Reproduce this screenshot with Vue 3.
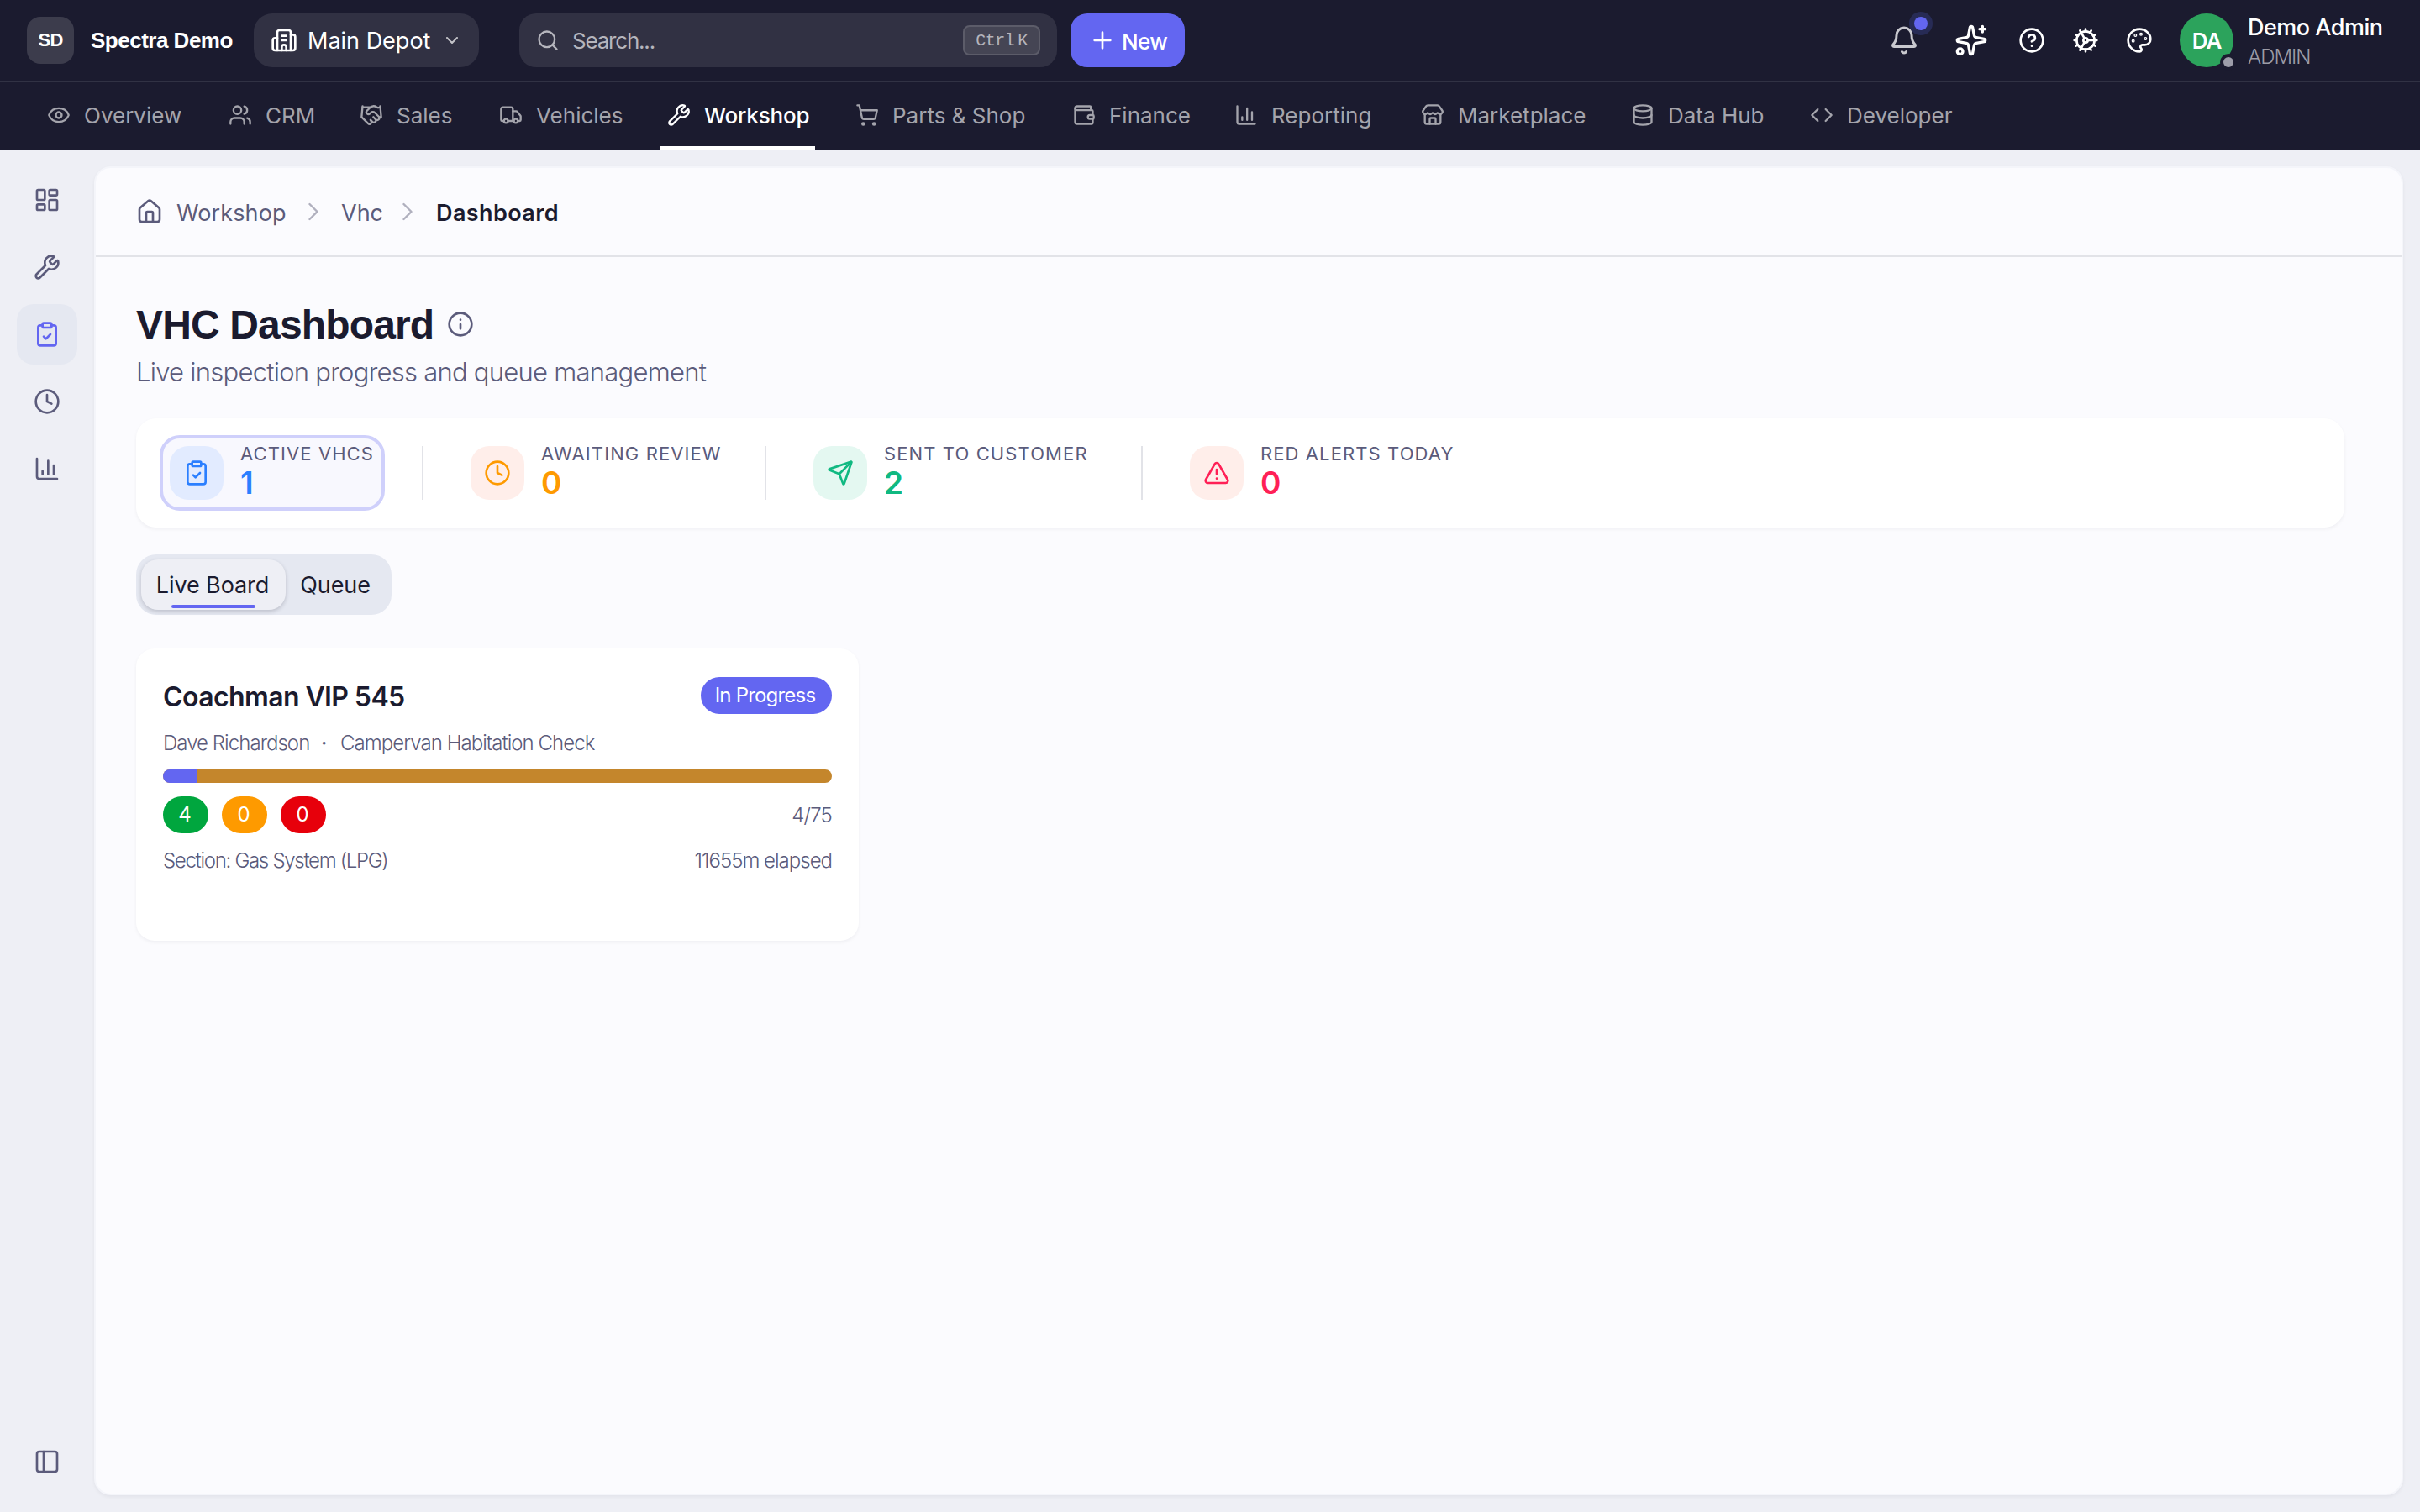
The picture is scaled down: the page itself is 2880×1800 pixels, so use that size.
<script setup>
    import { ref } from 'vue';

    const icons = {
        eye: '<path d="M2.062 12.348a1 1 0 0 1 0-.696 10.75 10.75 0 0 1 19.876 0 1 1 0 0 1 0 .696 10.75 10.75 0 0 1-19.876 0"/><circle cx="12" cy="12" r="3"/>',
        users: '<path d="M16 21v-2a4 4 0 0 0-4-4H6a4 4 0 0 0-4 4v2M16 3.128a4 4 0 0 1 0 7.744M22 21v-2a4 4 0 0 0-3-3.87"/><circle cx="9" cy="7" r="4"/>',
        handshake: '<path d="m11 17 2 2a1 1 0 1 0 3-3"/><path d="m14 14 2.5 2.5a1 1 0 1 0 3-3l-3.88-3.88a3 3 0 0 0-4.24 0l-.88.88a1 1 0 1 1-3-3l2.81-2.81a5.79 5.79 0 0 1 7.06-.87l.47.28a2 2 0 0 0 1.42.25L21 4"/><path d="m21 3 1 11h-2"/><path d="M3 3 2 14l6.5 6.5a1 1 0 1 0 3-3"/><path d="M3 4h8"/>',
        truck: '<path d="M14 18V6a2 2 0 0 0-2-2H4a2 2 0 0 0-2 2v11a1 1 0 0 0 1 1h2"/><path d="M15 18H9"/><path d="M19 18h2a1 1 0 0 0 1-1v-3.65a1 1 0 0 0-.22-.624l-3.48-4.35A1 1 0 0 0 17.52 8H14"/><circle cx="17" cy="18" r="2"/><circle cx="7" cy="18" r="2"/>',
        wrench: '<path d="M14.7 6.3a1 1 0 0 0 0 1.4l1.6 1.6a1 1 0 0 0 1.4 0l3.106-3.105c.32-.322.863-.22.983.218a6 6 0 0 1-8.259 7.057l-7.91 7.91a1 1 0 0 1-2.999-3l7.91-7.91a6 6 0 0 1 7.057-8.259c.438.12.54.662.219.984z"/>',
        cart: '<circle cx="8" cy="21" r="1"/><circle cx="19" cy="21" r="1"/><path d="M2.05 2.05h2l2.66 12.42a2 2 0 0 0 2 1.58h9.78a2 2 0 0 0 1.95-1.57l1.65-7.43H5.12"/>',
        wallet: '<path d="M19 7V4a1 1 0 0 0-1-1H5a2 2 0 0 0 0 4h15a1 1 0 0 1 1 1v4h-3a2 2 0 0 0 0 4h3a1 1 0 0 0 1-1v-2a1 1 0 0 0-1-1"/><path d="M3 5v14a2 2 0 0 0 2 2h15a1 1 0 0 0 1-1v-4"/>',
        chart: '<path d="M3 3v16a2 2 0 0 0 2 2h16M18 17V9M13 17V5M8 17v-3"/>',
        store: '<path d="M15 21v-5a1 1 0 0 0-1-1h-4a1 1 0 0 0-1 1v5"/><path d="M17.774 10.31a1.12 1.12 0 0 0-1.549 0 2.5 2.5 0 0 1-3.451 0 1.12 1.12 0 0 0-1.548 0 2.5 2.5 0 0 1-3.452 0 1.12 1.12 0 0 0-1.549 0 2.5 2.5 0 0 1-3.77-3.248l2.889-4.184A2 2 0 0 1 7 2h10a2 2 0 0 1 1.653.873l2.895 4.192a2.5 2.5 0 0 1-3.774 3.244"/><path d="M4 10.95V19a2 2 0 0 0 2 2h12a2 2 0 0 0 2-2v-8.05"/>',
        database: '<ellipse cx="12" cy="5" rx="9" ry="3"/><path d="M3 5V19A9 3 0 0 0 21 19V5"/><path d="M3 12A9 3 0 0 0 21 12"/>',
        code: '<path d="m16 18 6-6-6-6M8 6l-6 6 6 6"/>',
        building: '<path d="M10 12h4M10 8h4M14 21v-3a2 2 0 0 0-4 0v3"/><path d="M6 10H4a2 2 0 0 0-2 2v7a2 2 0 0 0 2 2h16a2 2 0 0 0 2-2V9a2 2 0 0 0-2-2h-2"/><path d="M6 21V5a2 2 0 0 1 2-2h8a2 2 0 0 1 2 2v16"/>',
        chevronDown: '<path d="m6 9 6 6 6-6"/>',
        chevronRight: '<path d="m9 18 6-6-6-6"/>',
        search: '<circle cx="11" cy="11" r="8"/><path d="m21 21-4.34-4.34"/>',
        plus: '<path d="M5 12h14M12 5v14"/>',
        bell: '<path d="M10.268 21a2 2 0 0 0 3.464 0"/><path d="M3.262 15.326A1 1 0 0 0 4 17h16a1 1 0 0 0 .74-1.673C19.41 13.956 18 12.499 18 8A6 6 0 0 0 6 8c0 4.499-1.411 5.956-2.738 7.326"/>',
        sparkles: '<path d="M11.017 2.814a1 1 0 0 1 1.966 0l1.051 5.558a2 2 0 0 0 1.594 1.594l5.558 1.051a1 1 0 0 1 0 1.966l-5.558 1.051a2 2 0 0 0-1.594 1.594l-1.051 5.558a1 1 0 0 1-1.966 0l-1.051-5.558a2 2 0 0 0-1.594-1.594l-5.558-1.051a1 1 0 0 1 0-1.966l5.558-1.051a2 2 0 0 0 1.594-1.594z"/><path d="M20 2v4M22 4h-4"/><circle cx="4" cy="20" r="2"/>',
        help: '<circle cx="12" cy="12" r="10"/><path d="M9.09 9a3 3 0 0 1 5.83 1c0 2-3 3-3 3M12 17h.01"/>',
        cog: '<path d="M11 10.27 7 3.34M11 13.73l-4 6.93M12 22v-2M12 2v2M14 12h8M17 20.66l-1-1.73M17 3.34l-1 1.73M2 12h2M20.66 17l-1.73-1M20.66 7l-1.73 1M3.34 17l1.73-1M3.34 7l1.73 1"/><circle cx="12" cy="12" r="2"/><circle cx="12" cy="12" r="8"/>',
        palette: '<path d="M12 22a1 1 0 0 1 0-20 10 9 0 0 1 10 9 5 5 0 0 1-5 5h-2.25a1.75 1.75 0 0 0-1.4 2.8l.3.4a1.75 1.75 0 0 1-1.4 2.8z"/><circle cx="13.5" cy="6.5" r=".5"/><circle cx="17.5" cy="10.5" r=".5"/><circle cx="6.5" cy="12.5" r=".5"/><circle cx="8.5" cy="7.5" r=".5"/>',
        dashboard: '<rect width="7" height="9" x="3" y="3" rx="1"/><rect width="7" height="5" x="14" y="3" rx="1"/><rect width="7" height="9" x="14" y="12" rx="1"/><rect width="7" height="5" x="3" y="16" rx="1"/>',
        clipboard: '<rect width="8" height="4" x="8" y="2" rx="1"/><path d="M16 4h2a2 2 0 0 1 2 2v14a2 2 0 0 1-2 2H6a2 2 0 0 1-2-2V6a2 2 0 0 1 2-2h2"/><path d="m9 14 2 2 4-4"/>',
        clock: '<circle cx="12" cy="12" r="10"/><path d="M12 6v6l4 2"/>',
        panel: '<rect width="18" height="18" x="3" y="3" rx="2"/><path d="M9 3v18"/>',
        home: '<path d="M15 21v-8a1 1 0 0 0-1-1h-4a1 1 0 0 0-1 1v8"/><path d="M3 10a2 2 0 0 1 .709-1.528l7-6a2 2 0 0 1 2.582 0l7 6A2 2 0 0 1 21 10v9a2 2 0 0 1-2 2H5a2 2 0 0 1-2-2z"/>',
        info: '<circle cx="12" cy="12" r="10"/><path d="M12 16v-4M12 8h.01"/>',
        send: '<path d="M14.536 21.686a.5.5 0 0 0 .937-.024l6.5-19a.496.496 0 0 0-.635-.635l-19 6.5a.5.5 0 0 0-.024.937l7.93 3.18a2 2 0 0 1 1.112 1.11z"/><path d="m21.854 2.147-10.94 10.939"/>',
        alert: '<path d="m21.73 18-8-14a2 2 0 0 0-3.48 0l-8 14A2 2 0 0 0 4 21h16a2 2 0 0 0 1.73-3"/><path d="M12 9v4M12 17h.01"/>'
    };

    // width is the full width of the tab, icon and padding included
    const nav = [
        { label: 'Overview', icon: 'eye', width: 176 },
        { label: 'CRM', icon: 'users', width: 116 },
        { label: 'Sales', icon: 'handshake', width: 126 },
        { label: 'Vehicles', icon: 'truck', width: 160 },
        { label: 'Workshop', icon: 'wrench', width: 184 },
        { label: 'Parts & Shop', icon: 'cart', width: 218 },
        { label: 'Finance', icon: 'wallet', width: 153 },
        { label: 'Reporting', icon: 'chart', width: 182 },
        { label: 'Marketplace', icon: 'store', width: 210 },
        { label: 'Data Hub', icon: 'database', width: 173 },
        { label: 'Developer', icon: 'code', width: 186 }
    ];
    const activeNav = ref('Workshop');

    const sideItems = ['dashboard', 'wrench', 'clipboard', 'clock', 'chart'];
    const activeSide = ref('clipboard');

    const stats = [
        { label: 'Active VHCs', value: 1, icon: 'clipboard', tone: 'blue', width: 268 },
        { label: 'Awaiting Review', value: 0, icon: 'clock', tone: 'orange', width: 318 },
        { label: 'Sent to Customer', value: 2, icon: 'send', tone: 'green', width: 358 },
        { label: 'Red Alerts Today', value: 0, icon: 'alert', tone: 'red', width: 340 }
    ];
    const activeStat = ref('Active VHCs');

    const tabs = ['Live Board', 'Queue'];
    const activeTab = ref('Live Board');

    const job = {
        vehicle: 'Coachman VIP 545',
        status: 'In Progress',
        technician: 'Dave Richardson',
        template: 'Campervan Habitation Check',
        green: 4,
        amber: 0,
        red: 0,
        done: 4,
        total: 75,
        percent: 5,
        section: 'Gas System (LPG)',
        elapsed: '11655m elapsed'
    };
</script>

<template>
    <div class="app">
        <header class="header">
            <div class="topbar">
                <div class="logo">SD</div>
                <div class="brand">Spectra Demo</div>
                <button type="button" class="depot">
                    <svg class="icon" viewBox="0 0 24 24" v-html="icons.building"></svg>
                    <span>Main Depot</span>
                    <svg class="icon chevron" viewBox="0 0 24 24" v-html="icons.chevronDown"></svg>
                </button>
                <div class="search">
                    <svg class="icon" viewBox="0 0 24 24" v-html="icons.search"></svg>
                    <span class="placeholder">Search...</span>
                    <kbd><span>Ctrl</span><span>K</span></kbd>
                </div>
                <button type="button" class="new">
                    <svg class="icon" viewBox="0 0 24 24" v-html="icons.plus"></svg>
                    <span>New</span>
                </button>
                <div class="actions">
                    <div class="bell">
                        <svg class="icon" viewBox="0 0 24 24" v-html="icons.bell"></svg>
                        <i class="dot"></i>
                    </div>
                    <svg class="icon sparkles" viewBox="0 0 24 24" v-html="icons.sparkles"></svg>
                    <svg class="icon" viewBox="0 0 24 24" v-html="icons.help"></svg>
                    <svg class="icon" viewBox="0 0 24 24" v-html="icons.cog"></svg>
                    <svg class="icon" viewBox="0 0 24 24" v-html="icons.palette"></svg>
                </div>
                <div class="avatar">DA<i class="presence"></i></div>
                <div class="user">
                    <div class="name">Demo Admin</div>
                    <div class="role">ADMIN</div>
                </div>
            </div>
            <nav class="nav">
                <a
                    v-for="item in nav"
                    :key="item.label"
                    :class="{active: item.label === activeNav}"
                    :style="{width: item.width + 'px'}"
                    @click="activeNav = item.label"
                >
                    <svg class="icon" viewBox="0 0 24 24" v-html="icons[item.icon]"></svg>
                    <span>{{ item.label }}</span>
                </a>
            </nav>
        </header>

        <div class="body">
            <aside class="sidebar">
                <button
                    v-for="name in sideItems"
                    :key="name"
                    type="button"
                    :class="{active: name === activeSide}"
                    @click="activeSide = name"
                >
                    <svg class="icon" viewBox="0 0 24 24" v-html="icons[name]"></svg>
                </button>
                <button type="button" class="toggle">
                    <svg class="icon" viewBox="0 0 24 24" v-html="icons.panel"></svg>
                </button>
            </aside>

            <main class="panel">
                <div class="breadcrumb">
                    <svg class="icon" viewBox="0 0 24 24" v-html="icons.home"></svg>
                    <span class="crumb first">Workshop</span>
                    <svg class="icon sep" viewBox="0 0 24 24" v-html="icons.chevronRight"></svg>
                    <span class="crumb second">Vhc</span>
                    <svg class="icon sep" viewBox="0 0 24 24" v-html="icons.chevronRight"></svg>
                    <span class="crumb current">Dashboard</span>
                </div>

                <div class="content">
                    <div class="title">
                        <h1>VHC Dashboard</h1>
                        <svg class="icon" viewBox="0 0 24 24" v-html="icons.info"></svg>
                    </div>
                    <p class="subtitle">Live inspection progress and queue management</p>

                    <div class="stats">
                        <template v-for="(stat, index) in stats" :key="stat.label">
                            <div v-if="index" class="divider"></div>
                            <div
                                class="stat"
                                :class="[stat.tone, {active: stat.label === activeStat}]"
                                :style="{width: stat.width + 'px'}"
                                @click="activeStat = stat.label"
                            >
                                <div class="tile">
                                    <svg class="icon" viewBox="0 0 24 24" v-html="icons[stat.icon]"></svg>
                                </div>
                                <div class="figures">
                                    <div class="label">{{ stat.label }}</div>
                                    <div class="value">{{ stat.value }}</div>
                                </div>
                            </div>
                        </template>
                    </div>

                    <div class="tabs">
                        <button
                            v-for="tab in tabs"
                            :key="tab"
                            type="button"
                            :class="{active: tab === activeTab}"
                            @click="activeTab = tab"
                        >{{ tab }}</button>
                    </div>

                    <div class="card">
                        <div class="row head">
                            <h2>{{ job.vehicle }}</h2>
                            <span class="status">{{ job.status }}</span>
                        </div>
                        <div class="meta">
                            <span class="tech">{{ job.technician }}</span>
                            <span class="mid">·</span>
                            <span class="tmpl">{{ job.template }}</span>
                        </div>
                        <div class="progress">
                            <div :style="{width: job.percent + '%'}"></div>
                        </div>
                        <div class="row counts">
                            <div class="pills">
                                <span class="pill green">{{ job.green }}</span>
                                <span class="pill amber">{{ job.amber }}</span>
                                <span class="pill red">{{ job.red }}</span>
                            </div>
                            <span class="total">{{ job.done }}/{{ job.total }}</span>
                        </div>
                        <div class="row foot">
                            <span class="section">Section: {{ job.section }}</span>
                            <span class="elapsed">{{ job.elapsed }}</span>
                        </div>
                    </div>
                </div>
            </main>
        </div>
    </div>
</template>

<style>
    body{
        background: #eeeff5;
    }
</style>

<style scoped>
    .app{
        width: 2880px;
        height: 1800px;
        overflow: hidden;
        display: flex;
        flex-direction: column;
        background: #eeeff5;
        color: #1b1b2f;
        font-family: Inter, "Liberation Sans", sans-serif;
        font-size: 26px;
    }
    .app *{
        box-sizing: border-box;
    }
    button{
        border: none;
        background: none;
        padding: 0;
        margin: 0;
        font: inherit;
        color: inherit;
    }
    span, a, h1, h2, .name, .role, .label, .brand{
        white-space: nowrap;
    }
    .icon{
        width: 32px;
        height: 32px;
        flex: none;
        display: block;
        fill: none;
        stroke: currentColor;
        stroke-width: 2;
        stroke-linecap: round;
        stroke-linejoin: round;
    }

    .header{
        height: 178px;
        background: #1b1b2f;
        color: #fff;
    }
    .topbar{
        height: 98px;
        padding: 0 45px 0 32px;
        border-bottom: 2px solid #313244;
        display: flex;
        align-items: center;
    }
    .logo{
        width: 56px;
        height: 56px;
        border-radius: 16px;
        background: #3c3c4c;
        display: flex;
        align-items: center;
        justify-content: center;
        font-family: "Liberation Sans", sans-serif;
        font-weight: 700;
        font-size: 22px;
        letter-spacing: -0.8px;
    }
    .brand{
        width: 214px;
        padding-left: 20px;
        font-family: "Liberation Sans", sans-serif;
        font-weight: 700;
        font-size: 26px;
        letter-spacing: -0.5px;
    }
    .depot{
        width: 268px;
        height: 64px;
        border-radius: 22px;
        background: #313143;
        display: flex;
        align-items: center;
        padding-left: 20px;
        font-size: 27px;
    }
    .depot span{
        width: 160px;
        margin-left: 12px;
        text-align: left;
    }
    .depot .chevron{
        width: 24px;
        height: 24px;
        opacity: 0.7;
    }
    .search{
        width: 640px;
        height: 64px;
        margin-left: 48px;
        padding: 0 20px;
        border-radius: 20px;
        background: #313143;
        color: #b5b5bd;
        display: flex;
        align-items: center;
    }
    .search .icon{
        width: 28px;
        height: 28px;
    }
    .placeholder{
        flex: 1;
        margin-left: 15px;
        font-size: 26px;
        letter-spacing: -1.2px;
    }
    kbd{
        width: 92px;
        height: 36px;
        border: 2px solid #5c5c69;
        border-radius: 8px;
        background: #454554;
        display: flex;
        align-items: center;
        justify-content: center;
        gap: 4px;
        font-family: "Liberation Mono", monospace;
        font-size: 20px;
        letter-spacing: -0.5px;
    }
    .new{
        width: 136px;
        height: 64px;
        margin-left: 16px;
        border-radius: 20px;
        background: #6366f1;
        display: flex;
        align-items: center;
        padding-left: 22px;
        gap: 7px;
        font-size: 26px;
        font-weight: 500;
        letter-spacing: -0.6px;
    }
    .new span{
        padding-top: 2px;
    }
    .actions{
        flex: 1;
        display: flex;
        align-items: center;
        justify-content: flex-end;
        gap: 32px;
    }
    .bell{
        position: relative;
        color: #c8c8ce;
        margin-right: 10px;
    }
    .bell .icon{
        width: 36px;
        height: 36px;
    }
    .dot{
        position: absolute;
        left: 30px;
        top: -10px;
        width: 16px;
        height: 16px;
        border-radius: 50%;
        background: #6366f1;
        box-shadow: 0 0 0 6px #272b55;
    }
    .sparkles{
        width: 40px;
        height: 40px;
        margin-right: 4px;
    }
    .avatar{
        position: relative;
        width: 64px;
        height: 64px;
        margin-left: 32px;
        border-radius: 50%;
        background: #2ca35c;
        display: flex;
        align-items: center;
        justify-content: center;
        font-size: 26px;
        font-weight: 600;
        letter-spacing: -1.2px;
    }
    .presence{
        position: absolute;
        right: -4px;
        bottom: -4px;
        width: 20px;
        height: 20px;
        border: 4px solid #1b1b2f;
        border-radius: 50%;
        background: #9d9da9;
    }
    .user{
        width: 160px;
        margin-left: 17px;
        padding-top: 4px;
    }
    .name{
        line-height: 36px;
        font-size: 27px;
        font-weight: 500;
        letter-spacing: -0.5px;
    }
    .role{
        line-height: 34px;
        font-size: 24px;
        font-weight: 300;
        letter-spacing: -1px;
        color: #9c9ca6;
    }

    .nav{
        height: 80px;
        padding-left: 48px;
        display: flex;
        gap: 40px;
    }
    .nav a{
        flex: none;
        height: 80px;
        padding: 2px 8px 0;
        display: flex;
        align-items: center;
        gap: 16px;
        color: #a4a4ac;
        font-size: 26px;
        border-bottom: 4px solid transparent;
        letter-spacing: 0;
    }
    .nav a.active{
        color: #fff;
        font-weight: 500;
        border-bottom-color: #fff;
        letter-spacing: -0.2px;
    }
    .nav .icon{
        width: 28px;
        height: 28px;
    }

    .body{
        flex: 1;
        display: flex;
        padding: 20px 20px 20px 0;
    }
    .sidebar{
        width: 112px;
        padding: 4px 20px 4px;
        display: flex;
        flex-direction: column;
        gap: 8px;
        color: #5b5b7b;
    }
    .sidebar button{
        width: 72px;
        height: 72px;
        border-radius: 20px;
        display: flex;
        align-items: center;
        justify-content: center;
    }
    .sidebar button.active{
        background: #e5e8f1;
        color: #6366f1;
    }
    .sidebar .toggle{
        margin-top: auto;
    }

    .panel{
        flex: 1;
        border: 2px solid #f4f5fa;
        border-radius: 20px;
        background: #fbfbfe;
        box-shadow: 0 2px 4px rgba(27, 27, 47, 0.05);
    }
    .breadcrumb{
        height: 106px;
        padding-left: 48px;
        border-bottom: 2px solid #e2e3e8;
        display: flex;
        align-items: center;
        color: #5b5b7b;
        font-size: 27px;
    }
    .breadcrumb .sep{
        width: 36px;
        height: 36px;
        stroke-width: 1.6;
        color: #b0b0be;
    }
    .crumb{
        padding-top: 2px;
    }
    .crumb.first{
        width: 145px;
        margin-left: 16px;
        letter-spacing: 0.1px;
    }
    .crumb.second{
        width: 61px;
        margin-left: 15px;
    }
    .crumb.current{
        margin-left: 16px;
        font-weight: 600;
        color: #1b1b2f;
        letter-spacing: 0.4px;
    }

    .content{
        padding: 48px 68px 0 48px;
    }
    .title{
        height: 64px;
        display: flex;
        align-items: center;
        gap: 16px;
        color: #5b5b7b;
    }
    h1{
        width: 354px;
        margin: 0;
        color: #1b1b2f;
        font-family: "Liberation Sans", sans-serif;
        font-size: 48px;
        font-weight: 700;
        letter-spacing: -0.85px;
    }
    .subtitle{
        height: 48px;
        margin: 0 0 32px;
        padding-top: 1px;
        line-height: 48px;
        font-size: 31px;
        font-weight: 300;
        color: #5b5b7b;
        letter-spacing: -0.75px;
    }
    .stats{
        height: 130px;
        padding: 0 28px;
        border-radius: 24px;
        background: #fff;
        box-shadow: 0 2px 4px rgba(27, 27, 47, 0.05);
        display: flex;
        align-items: center;
    }
    .divider{
        width: 2px;
        height: 64px;
        margin: 0 44px;
        background: #e2e3e8;
    }
    .stat{
        height: 90px;
        padding-left: 12px;
        border-radius: 24px;
        display: flex;
        align-items: center;
        gap: 20px;
    }
    .stat.active{
        padding-left: 8px;
        border: 4px solid #cfd0fb;
        background: #f8f8fe;
    }
    .tile{
        width: 64px;
        height: 64px;
        border-radius: 22px;
        display: flex;
        align-items: center;
        justify-content: center;
    }
    .figures{
        padding-bottom: 8px;
    }
    .label{
        height: 32px;
        line-height: 32px;
        font-size: 22px;
        letter-spacing: 1.1px;
        text-transform: uppercase;
        color: #5b5b7b;
    }
    .value{
        height: 38px;
        line-height: 38px;
        font-size: 37px;
        font-weight: 600;
    }
    .blue .tile{ background: #e2ebff; }
    .blue .tile, .blue .value{ color: #2b7fff; }
    .orange .tile{ background: #ffeeea; }
    .orange .tile, .orange .value{ color: #fe9a00; }
    .stat.green .tile{ background: #e4f8f1; }
    .stat.green .tile, .stat.green .value{ color: #10b981; }
    .stat.red .tile{ background: #ffeeea; }
    .stat.red .tile, .stat.red .value{ color: #ff2056; }

    .tabs{
        width: 304px;
        height: 72px;
        margin: 32px 0 40px;
        padding: 6px;
        border-radius: 24px;
        background: #e5e8f1;
        display: flex;
    }
    .tabs button{
        position: relative;
        flex: 1;
        height: 60px;
        padding-right: 2px;
        font-size: 27px;
        letter-spacing: -0.1px;
    }
    .tabs button.active{
        flex: none;
        width: 172px;
        border-radius: 20px;
        background: #eeeff5;
        box-shadow: 0 2px 5px rgba(27, 27, 47, 0.2);
    }
    .tabs button.active::after{
        content: "";
        position: absolute;
        left: 36px;
        right: 36px;
        bottom: 2px;
        height: 4px;
        border-radius: 2px;
        background: #6366f1;
    }

    .card{
        width: 860px;
        height: 348px;
        padding: 34px 32px;
        border-radius: 22px;
        background: #fff;
        box-shadow: 0 2px 4px rgba(27, 27, 47, 0.05);
        color: #5b5b7b;
        font-size: 24px;
        font-weight: 300;
    }
    .row{
        display: flex;
        align-items: center;
        justify-content: space-between;
    }
    .head{
        height: 44px;
    }
    h2{
        margin: 0;
        padding-top: 2px;
        font-size: 32px;
        font-weight: 600;
        letter-spacing: -0.6px;
        color: #1b1b2f;
    }
    .status{
        width: 156px;
        height: 44px;
        line-height: 44px;
        padding-right: 3px;
        border-radius: 22px;
        background: #6366f1;
        color: #fff;
        text-align: center;
        font-weight: 400;
        letter-spacing: -0.8px;
    }
    .meta{
        height: 36px;
        margin: 16px 0 14px;
        line-height: 37px;
        display: flex;
        letter-spacing: -0.95px;
    }
    .tech{
        width: 188px;
    }
    .mid{
        width: 23px;
        font-weight: 500;
    }
    .progress{
        height: 16px;
        border-radius: 8px;
        overflow: hidden;
        background: #c4862c;
    }
    .progress div{
        height: 16px;
        background: #6366f1;
    }
    .counts{
        height: 44px;
        margin: 16px 0 14px;
    }
    .total{
        letter-spacing: -0.8px;
    }
    .pills{
        display: flex;
        gap: 16px;
    }
    .pill{
        width: 54px;
        height: 44px;
        line-height: 44px;
        padding-right: 2px;
        border-radius: 22px;
        text-align: center;
        font-weight: 400;
        color: #fff;
    }
    .pill.green{ background: #00a63e; }
    .pill.amber{ background: #fe9a00; }
    .pill.red{ background: #e7000b; }
    .foot{
        height: 36px;
        padding-top: 1px;
    }
    .section{
        letter-spacing: -1.3px;
    }
    .elapsed{
        letter-spacing: -1px;
    }
</style>
